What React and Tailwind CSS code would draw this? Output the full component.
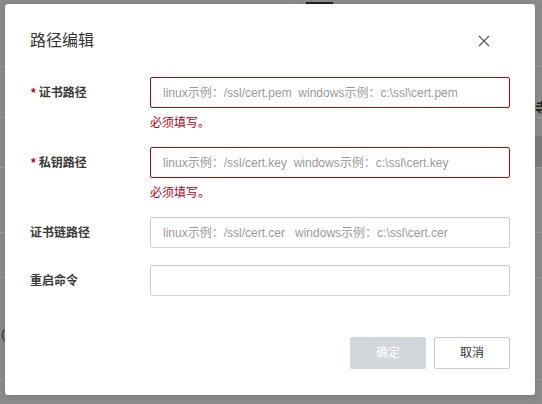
const fields = [
  {
    label: '证书路径',
    required: true,
    placeholder: 'linux示例：/ssl/cert.pem  windows示例：c:\\ssl\\cert.pem',
    error: true,
  },
  {
    label: '私钥路径',
    required: true,
    placeholder: 'linux示例：/ssl/cert.key  windows示例：c:\\ssl\\cert.key',
    error: true,
  },
  {
    label: '证书链路径',
    placeholder: 'linux示例：/ssl/cert.cer   windows示例：c:\\ssl\\cert.cer',
  },
  { label: '重启命令', placeholder: '' },
];

function Backdrop() {
  // page behind the mask, only a few rows peek out
  return (
    <div className="flex flex-col w-full">
      <div className="h-[67px] border-b border-[#9a9a9a] flex">
        <div className="ml-[290px] w-px h-[4px] bg-[#9a9a9a]" />
        <div className="ml-[15px] mt-[2px] w-[27px] h-[2px] bg-[#222]" />
      </div>
      <div className="h-[51px] border-b border-[#9a9a9a] flex justify-end items-end pb-[2px]">
        <span className="text-[14px] font-bold text-[#222] leading-none w-[7px] overflow-hidden whitespace-nowrap">寺</span>
      </div>
      <div className="h-[50px] border-b border-[#9a9a9a] flex justify-end items-end">
        <div className="w-[8px] h-[31px] bg-[#7b7b7b]" />
      </div>
      <div className="h-[65px] border-b border-[#9a9a9a]" />
      <div className="h-[45px] border-b border-[#9a9a9a]" />
      <div className="h-[102px] border-b border-[#9a9a9a] flex items-center">
        <span className="text-[13px] text-[#2a2a44] leading-none pl-[1px] pt-[10px]">(</span>
      </div>
    </div>
  );
}

function CloseIcon() {
  return (
    <svg width="12" height="12" viewBox="0 0 12 12" className="text-[#555]">
      <path d="M1 1L11 11M11 1L1 11" stroke="currentColor" strokeWidth="1.1" fill="none" />
    </svg>
  );
}

export default function App() {
  return (
    <div
      className="relative w-[542px] h-[404px] overflow-hidden bg-[#8b8b8b]"
      style={{ fontFamily: '"Liberation Sans", "Noto Sans CJK SC", sans-serif' }}
    >
      <Backdrop />
      <div className="absolute inset-0 pl-[5px] pt-[4px]">
        <div className="w-[530px] h-[391px] bg-white rounded-[3px] shadow-[0_1px_6px_rgba(0,0,0,0.15)] px-[25px] flex flex-col">
          <div className="h-[73px] flex items-center justify-between">
            <span className="text-[16px] text-[#333] leading-none">路径编辑</span>
            <span className="mr-[20px]">
              <CloseIcon />
            </span>
          </div>

          <div className="flex flex-col">
            {fields.map((f) => (
              <div key={f.label} className={f.error ? 'mb-[16px]' : 'mb-[17px]'}>
                <div className="flex items-center">
                  <div className="w-[120px] text-[12px] font-semibold text-[#3a3a3a] flex items-center">
                    {f.required && <span className="text-[#a8071a] mr-[3px] ml-[1px]">*</span>}
                    {f.label}
                  </div>
                  <input
                    placeholder={f.placeholder}
                    className={`w-[360px] h-[31px] px-[12px] text-[12px] text-[#333] outline-none border rounded-[2px] placeholder:text-[#9a9a9a] ${
                      f.error ? 'border-[#a8071a]' : 'border-[#cfcfcf]'
                    }`}
                  />
                </div>
                {f.error && (
                  <div className="pl-[120px] pt-[7px] text-[12px] leading-[16px] text-[#b00017]">必须填写。</div>
                )}
              </div>
            ))}
          </div>

          <div className="mt-auto mb-[26px] flex justify-end gap-[8px]">
            <button className="w-[76px] h-[32px] rounded-[2px] bg-[#d3d6db] text-white text-[12px]">确定</button>
            <button className="w-[76px] h-[32px] rounded-[2px] border border-[#cccccc] text-[#333] text-[12px] bg-white">
              取消
            </button>
          </div>
        </div>
      </div>
    </div>
  );
}
